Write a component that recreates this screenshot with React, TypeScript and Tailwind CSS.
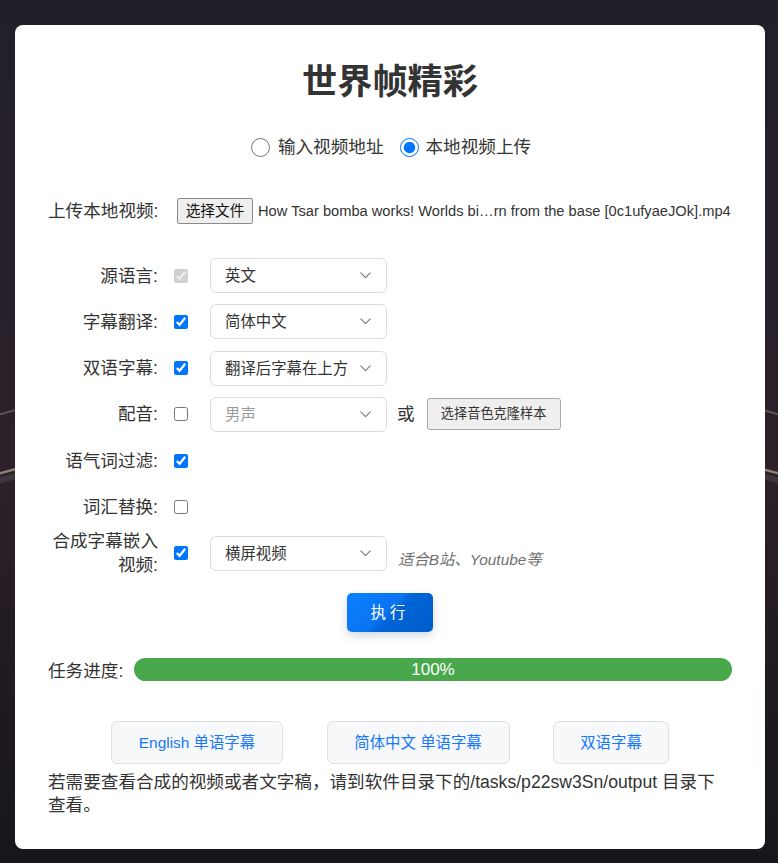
import React from "react";

const FONT = '"Liberation Sans", Arial, "Noto Sans CJK SC", sans-serif';

function Chevron() {
  return (
    <svg width="11" height="7" viewBox="0 0 11 7" fill="none" className="shrink-0">
      <path d="M0.8 0.8 L5.5 5.6 L10.2 0.8" stroke="#777" strokeWidth="1.1" strokeLinecap="round" strokeLinejoin="round" />
    </svg>
  );
}

function Select({ value, disabled }: { value: string; disabled?: boolean }) {
  return (
    <div
      className={`ml-[22px] flex h-[35px] w-[177px] shrink-0 items-center justify-between rounded-[6px] border border-[#dcdcdc] bg-white pl-[14px] pr-[15px] text-[15.4px] ${
        disabled ? "text-[#9a9a9a]" : "text-[#333]"
      }`}
    >
      <span>{value}</span>
      <Chevron />
    </div>
  );
}

function Label({ children }: { children: React.ReactNode }) {
  return (
    <div className="w-[110px] shrink-0 text-right text-[17.6px] leading-[24px] text-[#333]">{children}</div>
  );
}

function Check({ checked, disabled }: { checked?: boolean; disabled?: boolean }) {
  return (
    <input
      type="checkbox"
      defaultChecked={checked}
      disabled={disabled}
      className="m-0 ml-[16px] h-[14px] w-[14px] shrink-0"
    />
  );
}

function Row({ children }: { children: React.ReactNode }) {
  return <div className="flex h-[35px] items-center">{children}</div>;
}

export default function App() {
  return (
    <div
      className="relative min-h-[863px] w-full overflow-hidden bg-[linear-gradient(180deg,#221f28_0%,#27202a_35%,#2d2029_55%,#221b22_75%,#17161b_100%)] pb-[15px] pl-[15px] pr-[13px] pt-[25px]"
      style={{ fontFamily: FONT }}
    >
      <svg className="absolute left-0 top-0" width="778" height="863" viewBox="0 0 778 863" fill="none">
        <path d="M-20 420 Q389 300 798 420" stroke="#6f6a6a" strokeWidth="2" opacity="0.7" />
        <path d="M-20 479 Q389 360 798 479" stroke="#a59a94" strokeWidth="2.5" opacity="0.8" />
        <path d="M-20 486 Q389 368 798 486" stroke="#4a4247" strokeWidth="6" opacity="0.6" />
      </svg>
      <div className="relative rounded-[8px] bg-white px-[33px] pb-[32px] pt-[36px] text-[#333]">
        <h1 className="h-[42px] text-center text-[35.2px] font-bold leading-[42px] text-[#333]">世界帧精彩</h1>

        <div className="mt-[32px] flex h-[24px] items-center justify-center text-[17.6px] text-[#333]">
          <label className="ml-[2px] flex items-center">
            <input type="radio" name="src" className="m-0 h-[19px] w-[19px]" />
            <span className="ml-[8px]">输入视频地址</span>
          </label>
          <label className="ml-[16px] flex items-center">
            <input type="radio" name="src" defaultChecked className="m-0 h-[19px] w-[19px]" />
            <span className="ml-[7px]">本地视频上传</span>
          </label>
        </div>

        <div className="mt-[39px] flex h-[26px] items-center">
          <div className="w-[110px] shrink-0 whitespace-nowrap text-[17.6px] text-[#333]">上传本地视频:</div>
          <button className="ml-[19px] h-[26px] w-[76px] shrink-0 rounded-[2px] border border-[#8a8a8a] bg-[#efefef] text-[14.67px] text-[#111]">
            选择文件
          </button>
          <span className="ml-[5px] whitespace-nowrap text-[14.67px] text-[#333]">
            How Tsar bomba works! Worlds bi…rn from the base [0c1ufyaeJOk].mp4
          </span>
        </div>

        <div className="mt-[34px] flex flex-col gap-[11.3px]">
          <Row>
            <Label>源语言:</Label>
            <Check checked disabled />
            <Select value="英文" />
          </Row>
          <Row>
            <Label>字幕翻译:</Label>
            <Check checked />
            <Select value="简体中文" />
          </Row>
          <Row>
            <Label>双语字幕:</Label>
            <Check checked />
            <Select value="翻译后字幕在上方" />
          </Row>
          <Row>
            <Label>配音:</Label>
            <Check />
            <Select value="男声" disabled />
            <span className="ml-[10px] text-[17.6px] text-[#333]">或</span>
            <button className="ml-[12px] h-[32px] w-[134px] rounded-[3px] border border-[#a8a8a8] bg-[#efefef] text-[13.2px] text-[#333]">
              选择音色克隆样本
            </button>
          </Row>
          <Row>
            <Label>语气词过滤:</Label>
            <Check checked />
          </Row>
          <Row>
            <Label>词汇替换:</Label>
            <Check />
          </Row>
          <Row>
            <Label>合成字幕嵌入视频:</Label>
            <Check checked />
            <Select value="横屏视频" />
            <span className="ml-[11px] mt-[12px] text-[15.4px] italic text-[#6f6f6f]">适合B站、Youtube等</span>
          </Row>
        </div>

        <div className="mt-[22px] flex justify-center">
          <button className="h-[39px] w-[86px] rounded-[5px] bg-[linear-gradient(135deg,#0a80ff_0%,#0a74f2_45%,#0064d6_55%,#005ec9_100%)] text-[15.4px] tracking-[4px] text-white shadow-[0_4px_10px_rgba(0,40,100,0.18)]">
            执行
          </button>
        </div>

        <div className="mt-[23px] flex items-center">
          <span className="mt-[3px] w-[86px] shrink-0 text-[17.6px] text-[#333]">任务进度:</span>
          <div className="flex h-[23px] flex-1 items-center justify-center rounded-full bg-[#4aa84c] text-[17px] text-white">
            100%
          </div>
        </div>

        <div className="mt-[37px] flex justify-center gap-[43.5px]">
          <button className="h-[43px] w-[172px] rounded-[6px] border border-[#dde1e3] bg-[#f6f8f9] text-[15.4px] text-[#1677ff]">
            English 单语字幕
          </button>
          <button className="h-[43px] w-[183px] rounded-[6px] border border-[#dde1e3] bg-[#f6f8f9] text-[15.4px] text-[#1677ff]">
            简体中文 单语字幕
          </button>
          <button className="h-[43px] w-[116px] rounded-[6px] border border-[#dde1e3] bg-[#f6f8f9] text-[15.4px] text-[#1677ff]">
            双语字幕
          </button>
        </div>

        <p className="mt-[7px] text-[17.6px] leading-[23px] text-[#333]">
          若需要查看合成的视频或者文字稿，请到软件目录下的/tasks/p22sw3Sn/output 目录下查看。
        </p>
      </div>
    </div>
  );
}
